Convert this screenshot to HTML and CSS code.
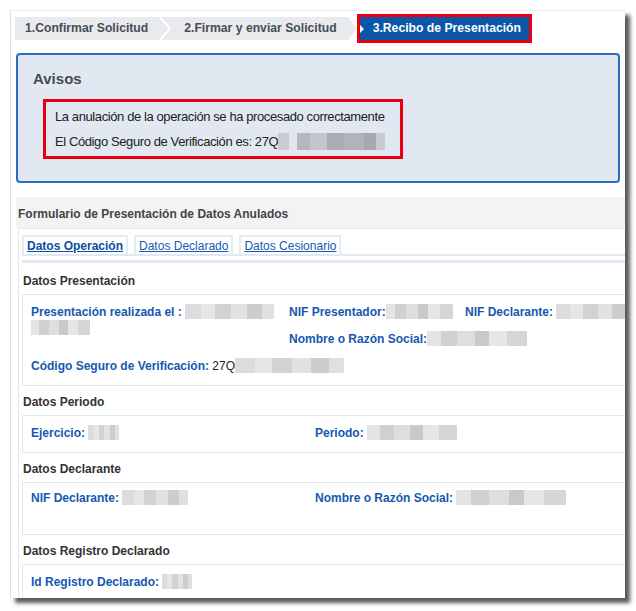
FILE: index.html
```html
<!DOCTYPE html>
<html lang="es">
<head>
    <meta charset="UTF-8">
    <meta name="viewport" content="width=device-width, initial-scale=1.0">
    <title>Recibo de Presentación</title>
    <link rel="stylesheet" href="styles.css">
</head>
<body>
    <div class="frame">
        <div class="page">
            <div class="steps">
                <div class="step step-one">1.Confirmar Solicitud</div>
                <svg class="sep" width="12" height="23" viewBox="0 0 12 23">
                    <rect width="12" height="23" fill="#e8eaed"/>
                    <polyline points="1,0 11,11.5 1,23" fill="none" stroke="#fff" stroke-width="2"/>
                </svg>
                <div class="step step-two">2.Firmar y enviar Solicitud</div>
                <svg class="sep" width="10" height="23" viewBox="0 0 10 23">
                    <rect width="10" height="23" fill="#fff"/>
                    <polygon points="0,0 9,11.5 0,23" fill="#e8eaed"/>
                </svg>
                <div class="step step-active">3.Recibo de Presentación</div>
            </div>

            <div class="avisos">
                <div class="avisos-title">Avisos</div>
                <div class="avisos-msg">
                    <div>La anulación de la operación se ha procesado correctamente</div>
                    <div>El Código Seguro de Verificación es: 27Q<span class="blur blur-dark w107"></span></div>
                </div>
            </div>

            <div class="form">
                <div class="form-head">Formulario de Presentación de Datos Anulados</div>
                <div class="form-body">
                    <div class="tabs">
                        <a class="tab active">Datos Operación</a>
                        <a class="tab">Datos Declarado</a>
                        <a class="tab">Datos Cesionario</a>
                    </div>
                    <div class="panel">
                        <div class="sec-title">Datos Presentación</div>
                        <div class="sec-box grid-three">
                            <div class="cell span-two"><span class="label">Presentación realizada el :</span> <span class="blur w89"></span><span class="blur blur-b w59"></span></div>
                            <div class="cell"><span class="label">NIF Presentador:</span><span class="blur blur-b w67"></span></div>
                            <div class="cell"><span class="label">NIF Declarante:</span> <span class="blur w80"></span></div>
                            <div class="cell col-two"><span class="label">Nombre o Razón Social:</span><span class="blur blur-b w100"></span></div>
                            <div class="cell col-one"><span class="label">Código Seguro de Verificación:</span> 27Q<span class="blur w109"></span></div>
                        </div>

                        <div class="sec-title">Datos Periodo</div>
                        <div class="sec-box grid-two">
                            <div class="cell"><span class="label">Ejercicio:</span> <span class="blur w31"></span></div>
                            <div class="cell"><span class="label">Periodo:</span> <span class="blur blur-b w90"></span></div>
                        </div>

                        <div class="sec-title">Datos Declarante</div>
                        <div class="sec-box grid-two tall">
                            <div class="cell"><span class="label">NIF Declarante:</span> <span class="blur w66"></span></div>
                            <div class="cell"><span class="label">Nombre o Razón Social:</span> <span class="blur blur-b w110"></span></div>
                        </div>

                        <div class="sec-title">Datos Registro Declarado</div>
                        <div class="sec-box grid-two">
                            <div class="cell"><span class="label">Id Registro Declarado:</span> <span class="blur w30"></span></div>
                        </div>
                    </div>
                </div>
            </div>
        </div>
    </div>
</body>
</html>
```

FILE: styles.css
```css
body {
    margin: 0;
    padding: 10px;
    background: #fff;
    font-family: "Liberation Sans", Arial, sans-serif;
    font-size: 12px;
    color: #222;
}
.frame {
    width: 614px;
    height: 587px;
    border-left: 1px solid #dedede;
    border-top: 1px solid #ececec;
    background: #fff;
    overflow: hidden;
    box-shadow: 5px 5px 4px rgba(0, 0, 0, 0.65);
}
.page {
    width: 700px;
    padding: 6px 0 0 4px;
}

/* steps */
.steps {
    display: flex;
    height: 23px;
    align-items: stretch;
}
.step {
    background: #e8eaed;
    color: #474d55;
    font-weight: bold;
    font-size: 12.2px;
    line-height: 23px;
    white-space: nowrap;
}
.step-one {
    padding: 0 11px 0 10px;
}
.step-two {
    padding: 0 11px 0 13px;
}
.step-active {
    position: relative;
    background: #0a56a8;
    color: #fff;
    padding: 0 8px 0 13px;
    margin-left: 2px;
    outline: 3px solid #e8000e;
}
.step-active::before {
    content: "";
    position: absolute;
    left: 0;
    top: 8px;
    border-left: 4px solid #fff;
    border-top: 4px solid transparent;
    border-bottom: 4px solid transparent;
}
.sep {
    display: block;
}

/* avisos */
.avisos {
    width: 600px;
    height: 126px;
    margin: 13px 0 0 1px;
    background: #e1e8f1;
    border: 2px solid #2a6dbc;
    border-radius: 4px;
}
.avisos-title {
    font-size: 15px;
    font-weight: bold;
    color: #464b52;
    line-height: 18px;
    padding: 15px 0 0 15px;
}
.avisos-msg {
    width: 336px;
    margin: 11px 0 0 25px;
    padding: 2px 9px;
    border: 3px solid #e8000e;
    font-size: 13px;
    letter-spacing: -0.4px;
    line-height: 25px;
    white-space: nowrap;
    color: #222;
}

/* form */
.form {
    margin: 14px 0 0 1px;
}
.form-head {
    background: #f3f3f3;
    color: #444;
    font-weight: bold;
    height: 28px;
    line-height: 28px;
    padding: 3px 0 0 2px;
}
.form-body {
    margin-left: 2px;
    border: 1px solid #dfe7ef;
    padding: 6px 0 0 3px;
}
.tabs {
    display: flex;
    gap: 6px;
    border-bottom: 2px solid #dfe9f4;
}
.tab {
    display: block;
    border: 2px solid #e4ecf4;
    border-bottom: none;
    padding: 1px 3px 0;
    line-height: 16px;
    color: #1558b0;
    text-decoration: underline;
}
.tab.active {
    font-weight: bold;
    color: #0d4c9f;
}
.panel {
    margin-top: 4px;
    border-top: 3px solid #dfe9f4;
    padding-top: 2px;
}
.sec-title {
    font-weight: bold;
    color: #333;
    line-height: 16px;
    padding: 8px 0 5px 1px;
}
.sec-box {
    display: grid;
    grid-auto-rows: 27px;
    border: 1px solid #e2eaf2;
    padding: 9px 0 0 8px;
}
.sec-box.tall {
    padding: 7px 0 17px 8px;
}
.grid-three {
    grid-template-columns: 258px 176px 1fr;
}
.grid-two {
    grid-template-columns: 284px 1fr;
}
.cell {
    line-height: 16px;
    white-space: nowrap;
}
.span-two {
    grid-row: span 2;
    white-space: normal;
}
.col-two {
    grid-column: 2;
}
.col-one {
    grid-column: 1;
}
.label {
    color: #1558b0;
    font-weight: bold;
}

/* blurred values */
.blur {
    display: inline-block;
    height: 15px;
    vertical-align: -3px;
    background: linear-gradient(90deg, #dcdcdc 0 18%, #e6e6e6 18% 34%, #d2d2d2 34% 52%, #e2e2e2 52% 70%, #cdcdcd 70% 86%, #e0e0e0 86% 100%);
}
.blur-b {
    background: linear-gradient(90deg, #e4e4e4 0 14%, #d0d0d0 14% 30%, #dedede 30% 48%, #c9c9c9 48% 62%, #e6e6e6 62% 80%, #d6d6d6 80% 100%);
}
.blur-dark {
    height: 17px;
    vertical-align: -4px;
    background: linear-gradient(90deg, #c8ccd2 0 10%, #e0e5ec 10% 18%, #b4b8be 18% 30%, #c2c6cc 30% 46%, #a9adb3 46% 62%, #b0b4ba 62% 80%, #a6aab0 80% 92%, #c6cad0 92% 100%);
}
.w30 { width: 30px; }
.w31 { width: 31px; }
.w59 { width: 59px; }
.w66 { width: 66px; }
.w67 { width: 67px; }
.w80 { width: 80px; }
.w89 { width: 89px; }
.w90 { width: 90px; }
.w100 { width: 100px; }
.w107 { width: 107px; }
.w109 { width: 109px; }
.w110 { width: 110px; }
```
